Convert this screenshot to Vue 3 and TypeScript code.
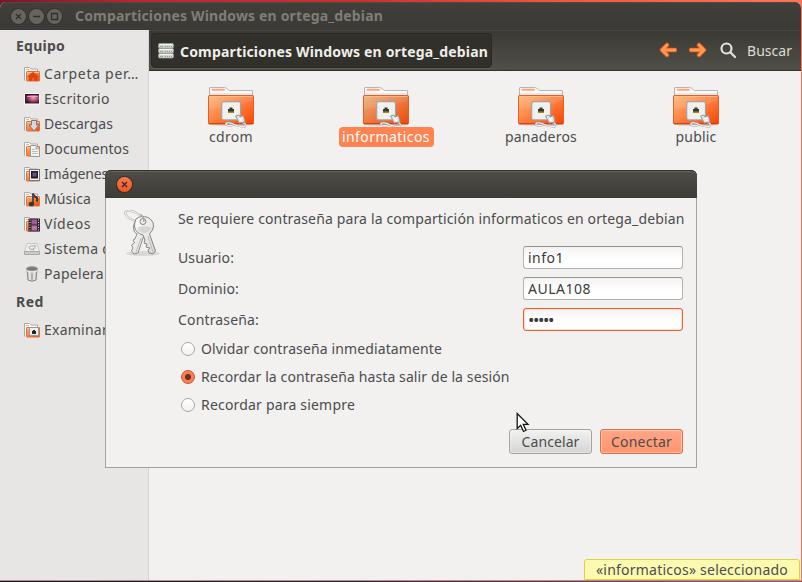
<script setup lang="ts">
import { ref } from 'vue'

interface Place { icon: string; label: string; width: number }
interface Share { name: string; width: number }
interface Option { id: string; label: string; width: number }

const places: Place[] = [
  { icon: 'home', label: 'Carpeta per…', width: 95 },
  { icon: 'desktop', label: 'Escritorio', width: 66 },
  { icon: 'download', label: 'Descargas', width: 69 },
  { icon: 'document', label: 'Documentos', width: 85 },
  { icon: 'picture', label: 'Imágenes', width: 64 },
  { icon: 'music', label: 'Música', width: 47 },
  { icon: 'video', label: 'Vídeos', width: 47 },
  { icon: 'disk', label: 'Sistema de…', width: 87 },
  { icon: 'trash', label: 'Papelera', width: 60 },
]
const network: Place[] = [{ icon: 'network', label: 'Examinar l…', width: 83 }]
const shares: Share[] = [
  { name: 'cdrom', width: 44 },
  { name: 'informaticos', width: 88 },
  { name: 'panaderos', width: 72 },
  { name: 'public', width: 41 },
]
const options: Option[] = [
  { id: 'forget', label: 'Olvidar contraseña inmediatamente', width: 241 },
  { id: 'session', label: 'Recordar la contraseña hasta salir de la sesión', width: 308.5 },
  { id: 'forever', label: 'Recordar para siempre', width: 154 },
]
const location = 'Comparticiones Windows en ortega_debian'
const selected = ref('informaticos')
const remember = ref('session')
const closed = ref(false)

// Tracks a label out or in so that it fills the given width.
const vFit = {
  mounted(el: HTMLElement, binding: { value: number }) {
    const count = (el.textContent ?? '').length
    const natural = el.getBoundingClientRect().width
    el.style.letterSpacing = `${(binding.value - natural) / count}px`
  },
}
</script>

<template>
  <div class="desktop">
    <svg class="defs" width="0" height="0">
      <defs>
        <linearGradient id="front" x1="0" y1="0" x2="1" y2="1">
          <stop offset="0" stop-color="#ffb978" /><stop offset=".4" stop-color="#fd8b4c" /><stop offset="1" stop-color="#fb4300" />
        </linearGradient>
        <linearGradient id="frontDim" x1="0" y1="0" x2="1" y2="1">
          <stop offset="0" stop-color="#e9b27c" /><stop offset=".5" stop-color="#ed7a40" /><stop offset="1" stop-color="#ef4709" />
        </linearGradient>
        <linearGradient id="metal" x1="0" y1="0" x2="1" y2="1">
          <stop offset="0" stop-color="#fff" /><stop offset="1" stop-color="#d5d5d3" />
        </linearGradient>
        <radialGradient id="wall" cx=".6" cy=".4" r=".6">
          <stop offset="0" stop-color="#f2a6b8" /><stop offset=".5" stop-color="#b04d77" /><stop offset="1" stop-color="#3b1230" />
        </radialGradient>
        <g id="mini">
          <path d="M.5 14.500V1.500H5.500L7 3H13.500V6" fill="#fafafa" stroke="#aaa" />
          <path d="M2 3.500H5" stroke="#ffb184" />
          <rect x="2.500" y="5.500" width="13" height="9.500" rx=".5" fill="url(#front)" stroke="#e2703f" />
          <path d="M3 6.500H15" stroke="#ffc69e" />
        </g>
      </defs>
    </svg>

    <section class="window">
      <header class="titlebar">
        <span class="wbtn"><svg viewBox="0 0 15 15"><path d="M5 5l5 5M10 5l-5 5" /></svg></span>
        <span class="wbtn"><svg viewBox="0 0 15 15"><path d="M4 7.500h7" /></svg></span>
        <span class="wbtn"><svg viewBox="0 0 15 15"><path d="M4.500 4.500h6v6h-6z" /></svg></span>
        <strong v-fit="308" class="wtitle">{{ location }}</strong>
      </header>

      <div class="body">
        <aside class="sidebar">
          <h2><span v-fit="49">Equipo</span></h2>
          <ul>
            <li v-for="p in places" :key="p.label">
              <svg class="mini" viewBox="0 0 16 16">
                <use v-if="!['desktop', 'disk', 'trash'].includes(p.icon)" href="#mini" />
                <g v-if="p.icon === 'home'">
                  <path d="M3.500 10.500L9 6 14.500 10.500 13 11V14.500H10.300V12H8V14.500H5V11z" fill="#e6400c" stroke="#c94b20" stroke-width=".5" />
                </g>
                <g v-else-if="p.icon === 'desktop'">
                  <rect y="2" width="16" height="11.500" fill="#fff" /><rect x="1" y="3" width="14" height="9.500" fill="url(#wall)" /><path d="M1 3.500H15" stroke="#35152b" /><path d="M3 5.500H14" stroke="#ecc5d0" stroke-width=".7" />
                </g>
                <g v-else-if="p.icon === 'download'">
                  <path d="M7.500 4.500H12.500V9H15L10 15 5 9H7.500z" fill="#d9d9d9" stroke="#777" />
                </g>
                <g v-else-if="p.icon === 'document'">
                  <path d="M6.500 4.500H12L15.500 8V15.500H6.500z" fill="#f3f3f1" stroke="#999" /><path d="M12 4.500V8H15.500" fill="#ccc" stroke="#999" stroke-width=".7" /><path d="M8 8.500h3M8 10.500h6M8 12.500h6" stroke="#bbb" />
                </g>
                <g v-else-if="p.icon === 'picture'">
                  <rect x="5.500" y="3.500" width="10" height="11" fill="#f5f5f5" stroke="#777" /><rect x="7" y="5" width="7" height="7.500" fill="#23192f" /><rect x="8.500" y="6.500" width="4" height="4" fill="#695475" />
                </g>
                <g v-else-if="p.icon === 'music'">
                  <path d="M9 13V2.500Q9.500 5.500 12.500 6.500 14 8 12.500 10.500" fill="none" stroke="#383838" stroke-width="2" /><ellipse cx="7.500" cy="13" rx="2.700" ry="2.300" fill="#383838" /><path d="M9 4V11" stroke="#888" stroke-width=".6" />
                </g>
                <g v-else-if="p.icon === 'video'">
                  <rect x="4.500" y="2.500" width="11.500" height="13" fill="#2a232a" /><rect x="7.500" y="3.500" width="5.500" height="5" fill="#a05a9a" /><rect x="7.500" y="9.500" width="5.500" height="5" fill="#b674aa" /><path d="M6 3.500V15M14.500 3.500V15" stroke="#ddd" stroke-dasharray="1 1.500" />
                </g>
                <g v-else-if="p.icon === 'disk'">
                  <path d="M3 2.500H13L15.500 10.500V13.500H.5V10.500z" fill="#efefee" stroke="#c6c6c4" /><path d="M.5 10.500H15.500V13.500H.5z" fill="#ccccca" stroke="#a9a9a7" /><path d="M11.500 5H7Q4.500 5.500 5 7T8 8.500H9.500" fill="none" stroke="#aaa" /><path d="M11 4V8M9.500 7v2.500" stroke="#aaa" />
                </g>
                <g v-else-if="p.icon === 'trash'">
                  <path d="M3 3L4 14Q8 16.500 12 14L13 3z" fill="#cbcccc" stroke="#858585" /><path d="M5.500 6l.5 8M10.500 6l-.5 8" stroke="#e8e8e8" stroke-width="1.500" /><path d="M8 7v7" stroke="#aaa" stroke-width="1.500" /><ellipse cx="8" cy="2.800" rx="5.600" ry="2.200" fill="#77797a" stroke="#a3a3a3" /><path d="M3 5Q8 7 13 5" fill="none" stroke="#f0f0f0" />
                </g>
              </svg>
              <span v-fit="p.width">{{ p.label }}</span>
            </li>
          </ul>
          <h2 class="second"><span v-fit="28">Red</span></h2>
          <ul>
            <li v-for="p in network" :key="p.label">
              <svg class="mini" viewBox="0 0 16 16">
                <use href="#mini" /><rect x="5.500" y="5.500" width="9" height="8" fill="#eee" stroke="#999" /><path d="M8 12V9H9V8H11V9H12V12z" fill="#222" />
              </svg>
              <span v-fit="p.width">{{ p.label }}</span>
            </li>
          </ul>
        </aside>

        <main class="content">
          <nav class="toolbar">
            <button class="location">
              <svg width="16" height="16" viewBox="0 0 16 16">
                <g v-for="n in 3" :key="n" :transform="`translate(0 ${(n - 1) * 5})`">
                  <rect x=".5" y=".5" width="15" height="4.500" rx="1.300" fill="#d3d4d0" stroke="#a0a19b" stroke-width=".8" /><path d="M1.500 1.500H14.500" stroke="#f1f1ee" /><path d="M2 3.500H5" stroke="#84bb78" /><path d="M7 3.500H14" stroke="#969791" stroke-dasharray="1 1" />
                </g>
              </svg>
              <strong v-fit="308">{{ location }}</strong>
            </button>
            <div class="tools">
              <svg width="18" height="16" viewBox="0 0 18 16"><path d="M8 3L3 8l5 5M3.500 8H16" class="arrow-rim" /><path d="M8 3L3 8l5 5M3.500 8H16" class="arrow-core" /></svg>
              <svg width="18" height="16" viewBox="0 0 18 16"><path d="M10 3l5 5-5 5M14.500 8H2" class="arrow-rim" /><path d="M10 3l5 5-5 5M14.500 8H2" class="arrow-core" /></svg>
              <svg class="search" width="17" height="17" viewBox="0 0 17 17"><circle cx="6.500" cy="6.500" r="5" /><path d="M10.300 10.300L15 15" /></svg>
              <span v-fit="45">Buscar</span>
            </div>
          </nav>

          <div class="shares">
            <figure v-for="s in shares" :key="s.name" :class="{ selected: s.name === selected }" @click="selected = s.name">
              <svg width="50" height="44" viewBox="0 0 50 44">
                <ellipse cx="25" cy="39.500" rx="22" ry="1.500" fill="#000" opacity=".15" />
                <path d="M3.500 14V3Q3.500 2.500 4 2.500H18.500Q20 2.500 21.500 4L23.500 5.500H46Q46.500 5.500 46.500 6V14z" fill="#fafafa" stroke="#b5b5b5" />
                <path d="M6.500 4.800H18" stroke="#ffa574" stroke-width="2" stroke-linecap="round" />
                <path d="M4 9H46" stroke="#d5d5d5" />
                <rect x="2.500" y="10.500" width="45" height="28.500" rx=".8" :fill="s.name === selected ? 'url(#frontDim)' : 'url(#front)'" stroke="#e0602a" />
                <path d="M3.500 11.500H46.500" stroke="#ffc293" opacity=".8" />
                <path d="M3 24Q30 23 47 15V12H3z" fill="#fff" opacity=".09" />
                <path d="M3 38.500H47" stroke="#c93100" opacity=".65" />
                <rect x="15.700" y="16.700" width="18.800" height="18.200" rx="1.800" fill="#f0f0ee" stroke="#a5a39f" stroke-width="1.200" />
                <path d="M22 28V24H23.500V22.500H26.500V24H28V28z" fill="#303831" /><path d="M22 27.200H28" stroke="#a68b0d" stroke-width="1.500" />
                <path d="M36 37.500Q41 38 38.500 41.500Q31 41.500 26 38.500Q21 37 20 38.500Q19 41 26 40.500" fill="none" stroke="#999" stroke-width="2" />
                <path d="M36 37.500Q41 38 38.500 41.500Q31 41.500 26 38.500Q21 37 20 38.500Q19 41 26 40.500" fill="none" stroke="#f2f2f2" stroke-width="1.100" />
                <path d="M29.500 31L33 30 34 32 37.500 30.500 39 37 33 38 31.500 34.500z" fill="#e2e2e0" stroke="#999" /><path d="M33 33l3 3M36 32l-2 4" stroke="#fff" />
              </svg>
              <figcaption><span v-fit="s.width">{{ s.name }}</span></figcaption>
            </figure>
          </div>
        </main>
      </div>
      <div class="status"><span v-fit="192">«informaticos» seleccionado</span></div>
    </section>

    <form v-if="!closed" class="dialog" @submit.prevent="closed = true">
      <header class="dialog-bar">
        <button type="button" class="close" @click="closed = true"><svg viewBox="0 0 15 15"><path d="M5 5l5 5M10 5l-5 5" /></svg></button>
      </header>
      <div class="dialog-body">
        <svg class="keys" width="38" height="48" viewBox="0 0 38 48">
          <ellipse cx="19" cy="43.500" rx="17" ry="2.500" fill="#000" opacity=".1" />
          <ellipse cx="9.500" cy="6" rx="9" ry="4" transform="rotate(25 9.500 6)" fill="none" stroke="#b5b5b5" stroke-width="2.200" />
          <ellipse cx="9.500" cy="6" rx="9" ry="4" transform="rotate(25 9.500 6)" fill="none" stroke="#f5f5f5" />
          <path d="M12 10Q8 16 10.500 22L13 24 11 29 9 30 10.500 33 7.500 35 9 38 7.500 41 10 44 14 43 20 25Q27 19 22 10z" fill="url(#metal)" stroke="#8c8c8c" />
          <path d="M12 9Q17 5 24 7.500Q32 12 28.500 20L25.500 24 31.500 41 29 44 25 43 24 40 26 38 22 37 23 34 20 33 21 30 19 25Q11 23 10.500 16Q10.500 12 12 9z" fill="url(#metal)" stroke="#858585" />
          <path d="M13 18Q20 14 28 18Q24 24 19 23Q14 22 13 18z" fill="#c9c9c7" opacity=".65" />
          <path d="M24 26l5 16M17 28l-5 14" stroke="#bbb" />
          <circle cx="19" cy="11.500" r="3" fill="#eee" stroke="#858585" />
          <path d="M16 4.500Q21 7 19.500 12" fill="none" stroke="#aaa" stroke-width="1.500" />
        </svg>
        <div class="fields">
          <p class="message"><span v-fit="506.5">Se requiere contraseña para la compartición informaticos en ortega_debian</span></p>
          <label class="field"><span v-fit="56">Usuario:</span><span class="entry"><span v-fit="36">info1</span></span></label>
          <label class="field"><span v-fit="61">Dominio:</span><span class="entry"><span v-fit="63">AULA108</span></span></label>
          <label class="field"><span v-fit="81">Contraseña:</span><span class="entry focused"><span v-fit="25" class="dots">•••••</span></span></label>
          <div class="options">
            <label v-for="o in options" :key="o.id" @click="remember = o.id">
              <i class="radio" :class="{ on: remember === o.id }"></i><span v-fit="o.width">{{ o.label }}</span>
            </label>
          </div>
          <footer>
            <button type="button" @click="closed = true"><span v-fit="58">Cancelar</span></button>
            <button type="submit" class="primary"><span v-fit="61">Conectar</span></button>
          </footer>
        </div>
      </div>
    </form>

    <svg class="pointer" width="14" height="22" viewBox="0 0 14 22"><path d="M1.200 1.500V16.500L4.700 13.300 7.500 19.500 10 18.300 7.300 12.300H12z" fill="#fff" stroke="#151515" stroke-width="1.300" /></svg>
  </div>
</template>

<style>
body { margin: 0; overflow: hidden; }
</style>

<style scoped>
* { box-sizing: border-box; }
.desktop {
  position: relative; width: 802px; height: 582px; padding: 2px 1px 1px 0; overflow: hidden;
  background: linear-gradient(90deg, #7c1526 0, #bd2630 18%, #c9312f 45%, #f0583c 70%, #ff7359 100%);
  font: 14px/20px "Noto Sans", "Open Sans", sans-serif; color: #4c4c4c;
}
.desktop::after {
  content: ""; position: absolute; left: 0; right: 0; bottom: 0; height: 1px;
  background: linear-gradient(90deg, #2d0a1c, #4d1630 45%, #b94859);
}
.defs { position: absolute; }
span, strong { white-space: nowrap; }
button { font: inherit; color: inherit; cursor: default; }
.window {
  position: relative; display: flex; flex-direction: column; height: 579px;
  background: #f2f1f0; border-bottom: 1px solid #9d9997; border-radius: 6px 6px 0 0; overflow: hidden;
}
.titlebar {
  display: flex; align-items: center; gap: 3px; height: 28px; flex: none; padding-left: 11px;
  background: linear-gradient(#403f3a, #3b3a36); box-shadow: inset 0 1px #4b4a45; color: #807d78;
}
.wbtn { width: 15px; height: 15px; border-radius: 50%; background: #66645d; box-shadow: 0 0 0 1px #34332f; }
.wbtn svg, .close svg { display: block; width: 100%; height: 100%; fill: none; stroke: #302f2b; stroke-width: 1.300; }
.wtitle { margin-left: 10px; }
.body { display: flex; flex: 1; min-height: 0; }
.sidebar { width: 149px; padding: 1px 0 0 16px; background: #e7e6e4; border-right: 1px solid #d6d4d2; }
h2 { height: 30px; margin: 0; font-size: 14px; line-height: 30px; font-weight: 700; }
h2.second { margin-top: 1px; }
ul { list-style: none; margin: 0; padding: 0 0 0 8px; }
li { display: flex; align-items: center; gap: 4px; height: 25px; }
.mini { width: 16px; height: 16px; flex: none; }
.content { flex: 1; min-width: 0; }
.toolbar {
  display: flex; align-items: center; justify-content: space-between; height: 41px; padding: 0 9px 0 2px;
  background: linear-gradient(#3a3934, #514f48); border-bottom: 1px solid #302f2b; box-shadow: inset 0 1px #484741; color: #dfdbd2;
}
.location {
  display: flex; align-items: center; gap: 6px; height: 35px; width: 341px; padding: 0 0 0 6px; margin-top: 1px;
  background: #31302b; border: 1px solid #292824; border-radius: 4px; box-shadow: 0 1px #5b5951; color: #f0eee8;
}
.location strong { padding-top: 2px; }
.tools { display: flex; align-items: center; }
.tools svg + svg { margin-left: 12px; }
.tools svg + .search { margin-left: 13px; }
.tools span { margin-left: 10px; padding-top: 2px; }
.arrow-rim { fill: none; stroke: #e5581c; stroke-width: 4.500; stroke-linejoin: round; stroke-linecap: round; }
.arrow-core { fill: none; stroke: #ff994f; stroke-width: 2.800; stroke-linejoin: round; stroke-linecap: round; }
.search { fill: none; stroke: #e6e2da; stroke-width: 2.200; stroke-linecap: round; }
.shares { display: grid; grid-template-columns: repeat(4, 155px); padding: 14px 0 0 4px; }
figure { display: flex; flex-direction: column; align-items: center; margin: 0; }
figure svg { display: block; margin-bottom: -2px; }
figcaption { height: 20px; margin-left: 2px; padding: 0 4px 0 3px; border-radius: 4px; line-height: 19px; }
.selected figcaption { background: #ff8452; color: #fff; }
.status {
  position: absolute; right: 1px; bottom: 0; height: 21px; padding: 0 11px; line-height: 20px;
  background: #fbfab0; border: 1px solid #dcd33d; border-radius: 3px 3px 0 0;
}
.dialog {
  position: absolute; left: 105px; top: 170px; width: 592px; height: 298px;
  background: #f2f1f0; border: 1px solid #a5a3a0; border-top: 0; border-radius: 6px 6px 0 0;
}
.dialog-bar {
  display: flex; align-items: center; height: 28px; margin: 0 -1px; padding-left: 12px;
  background: linear-gradient(#504e47, #3c3b37); border-radius: 6px 6px 0 0; box-shadow: inset 0 1px #33322d, inset 0 2px #64625b;
}
.close { width: 15px; height: 15px; padding: 0; border: 0; border-radius: 50%; background: linear-gradient(#fb7a51, #f4531c); box-shadow: 0 0 0 1px #35302b; }
.dialog-body { display: flex; }
.keys { flex: none; margin: 12px 15px 0 18px; }
.fields { width: 507px; margin-left: 1px; padding-top: 11px; }
.message { margin: 0 0 17px; }
.field { display: flex; justify-content: space-between; align-items: center; height: 23px; margin-bottom: 8px; }
.entry {
  display: flex; align-items: center; width: 160px; height: 23px; margin-right: 2px; padding-left: 4px;
  background: linear-gradient(#f3f3f3, #fff 60%); border: 1px solid #b5b1ac; border-top-color: #96918b; border-radius: 3px; color: #3c3c3c;
}
.entry.focused { border-color: #e66030; box-shadow: inset 0 0 0 1px #fbe0d4; }
.dots { font-size: 17px; }
.options { display: flex; flex-direction: column; margin-top: -4px; }
.options label { display: flex; align-items: center; height: 28px; gap: 6px; padding-left: 3px; }
.radio { width: 14px; height: 14px; border: 1px solid #aaa7a3; border-radius: 50%; background: linear-gradient(#fff, #f1f1f1); }
.radio.on { border-color: #c8552e; background: radial-gradient(circle, #70321b 0 2.700px, #f97e55 3.500px); }
footer { display: flex; justify-content: flex-end; gap: 8px; margin: 10px 2px 0 0; }
footer button {
  width: 83px; height: 25px; padding: 0; line-height: 22px; border: 1px solid #a7a29d; border-radius: 3px;
  background: linear-gradient(#f1f1f0, #d5d5d5); box-shadow: inset 0 0 0 1px rgba(255,255,255,.35);
}
footer .primary { border-color: #d8714d; background: linear-gradient(#ffa587, #ff966f); }
.pointer { position: absolute; left: 516px; top: 412px; }
</style>
